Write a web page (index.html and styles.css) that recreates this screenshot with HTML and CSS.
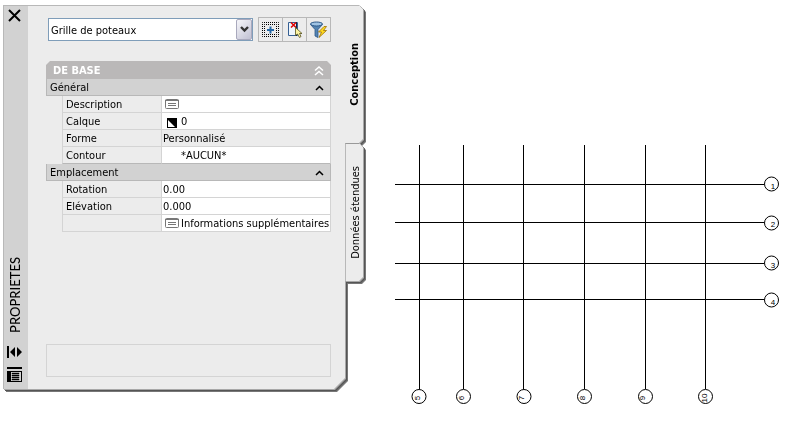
FILE: index.html
```
<!DOCTYPE html>
<html lang="fr">
<head>
    <meta charset="UTF-8">
    <meta name="viewport" content="width=device-width, initial-scale=1.0">
    <title>Propriétés</title>
    <link rel="stylesheet" href="styles.css">
</head>
<body>
    <main class="workspace">
        <section class="palette">
            <div class="titlebar">
                <button class="icon-button" aria-label="Fermer">
                    <svg width="14" height="14" viewBox="0 0 14 14"><path d="M1 1l11 11M12 1L1 12" stroke="#000" stroke-width="2" fill="none"/></svg>
                </button>
                <h1 class="title">PROPRIETES</h1>
                <button class="icon-button" aria-label="Masquer automatiquement">
                    <svg width="16" height="14" viewBox="0 0 16 14"><path d="M0 1h2v12H0zM8 2v10L3 7zM10 2v10l5-5z"/></svg>
                </button>
                <button class="icon-button" aria-label="Menu">
                    <svg width="16" height="16" viewBox="0 0 16 16"><path d="M0 0h15v2H0zM0 4h15v11H0z"/><path d="M4 5h10v9H4z" fill="#d2d2d2"/><path d="M5 6h7v1H5zM5 8h7v1H5zM5 10h7v1H5zM5 12h7v1H5z" stroke="#000" stroke-width=".4"/></svg>
                </button>
            </div>

            <div class="panel">
                <div class="toolbar">
                    <div class="combo">
                        <select aria-label="Type d'objet">
                            <option>Grille de poteaux</option>
                        </select>
                        <span class="combo-arrow"><svg width="9" height="7" viewBox="0 0 9 7"><path d="M1 1l3.500 3.500L8 1" stroke="#333" stroke-width="2.400" fill="none"/></svg></span>
                    </div>
                    <div class="tools">
                        <button aria-label="Ajout rapide">
                            <svg width="17" height="17" viewBox="0 0 17 17">
                                <path d="M.5 1.500h16v14H.5zM2.500 3.500h12v10h-12z" fill="none" stroke="#000" stroke-dasharray="1 1" stroke-dashoffset=".5"/>
                                <path d="M8.500 5.500v7M5 9h7" stroke="#2467a5" stroke-width="2"/>
                            </svg>
                        </button>
                        <button aria-label="Choix des objets">
                            <svg width="17" height="17" viewBox="0 0 17 17">
                                <path d="M2.500 1.500h9v13h-9z" fill="#eef5fc" stroke="#355f93"/>
                                <path d="M10.500 1v14" stroke="#0b2348"/>
                                <path d="M5 1.500l5 5M10 1.500l-5 5" stroke="#e00000" stroke-width="1.500"/>
                                <path d="M9.500 6.500v8l2-1.500 2 3.500 1.500-1-1.500-3h2.500z" fill="#fbf3a0" stroke="#55501c" stroke-width=".8"/>
                            </svg>
                        </button>
                        <button aria-label="Sélection rapide">
                            <svg width="17" height="17" viewBox="0 0 17 17">
                                <path d="M.5 3.500l4.500 5V15l3 1.500V8.500l4.500-5z" fill="#5584b2" stroke="#2c5889" stroke-width=".8"/>
                                <ellipse cx="6.500" cy="3" rx="6" ry="2" fill="#9fc3e4" stroke="#2c5889"/>
                                <path d="M14 5.500L8.500 11h3L9 16.500l7.500-7h-3l3-4z" fill="#ffd91f" stroke="#9b7008" stroke-width=".8"/>
                            </svg>
                        </button>
                    </div>
                </div>

                <div class="category">
                    <h2>DE BASE</h2>
                    <button class="icon-button" aria-label="Réduire tout">
                        <svg width="10" height="10" viewBox="0 0 10 10"><path d="M1 4.500L5 1l4 3.500M1 9l4-3.500L9 9" stroke="#fff" stroke-width="1.500" fill="none"/></svg>
                    </button>
                </div>
                <table class="properties">
                    <colgroup>
                        <col class="col-indent">
                        <col class="col-name">
                        <col>
                    </colgroup>
                    <tbody>
                        <tr class="group">
                            <th colspan="3" scope="rowgroup">
                                <div class="group-title">Général
                                    <button class="icon-button" aria-label="Réduire Général"><svg width="9" height="6" viewBox="0 0 9 6"><path d="M1 5l3.500-3.500L8 5" stroke="#000" stroke-width="1.500" fill="none"/></svg></button>
                                </div>
                            </th>
                        </tr>
                        <tr>
                            <td class="indent"></td>
                            <th scope="row">Description</th>
                            <td><div class="value"><span class="slot"><svg width="14" height="10" viewBox="0 0 14 10"><rect x=".5" y=".5" width="13" height="9" rx="1" fill="#fff" stroke="#777"/><path d="M0 1.500h14M3 4.500h8M3 6.500h8" stroke="#777"/></svg></span></div></td>
                        </tr>
                        <tr>
                            <td class="indent"></td>
                            <th scope="row">Calque</th>
                            <td><div class="value"><span class="slot layer"><svg width="10" height="10" viewBox="0 0 10 10"><path d="M0 0h10v10H0z"/><path d="M1 2v7h7z" fill="#fff"/></svg></span>0</div></td>
                        </tr>
                        <tr class="readonly">
                            <td class="indent"></td>
                            <th scope="row">Forme</th>
                            <td><div class="value">Personnalisé</div></td>
                        </tr>
                        <tr>
                            <td class="indent"></td>
                            <th scope="row">Contour</th>
                            <td><div class="value"><span class="slot"></span>*AUCUN*</div></td>
                        </tr>
                    </tbody>
                    <tbody>
                        <tr class="group">
                            <th colspan="3" scope="rowgroup">
                                <div class="group-title">Emplacement
                                    <button class="icon-button" aria-label="Réduire Emplacement"><svg width="9" height="6" viewBox="0 0 9 6"><path d="M1 5l3.500-3.500L8 5" stroke="#000" stroke-width="1.500" fill="none"/></svg></button>
                                </div>
                            </th>
                        </tr>
                        <tr>
                            <td class="indent"></td>
                            <th scope="row">Rotation</th>
                            <td><div class="value">0.00</div></td>
                        </tr>
                        <tr>
                            <td class="indent"></td>
                            <th scope="row">Elévation</th>
                            <td><div class="value">0.000</div></td>
                        </tr>
                        <tr>
                            <td class="indent"></td>
                            <th scope="row"></th>
                            <td><div class="value"><span class="slot"><svg width="14" height="10" viewBox="0 0 14 10"><rect x=".5" y=".5" width="13" height="9" rx="1" fill="#fff" stroke="#777"/><path d="M0 1.500h14M3 4.500h8M3 6.500h8" stroke="#777"/></svg></span>Informations supplémentaires</div></td>
                        </tr>
                    </tbody>
                </table>

                <div class="help-box"></div>
            </div>

            <nav class="tabs">
                <button class="tab active"><span>Conception</span></button>
                <button class="tab"><span>Données étendues</span></button>
            </nav>
        </section>

        <!-- column grid, labels are turned with the lines -->
        <svg class="drawing" viewBox="394 144 386 262" role="img" aria-label="Grille de poteaux">
            <g class="lines">
                <path d="M395 184.500H764M395 222.500H764M395 263.500H764M395 299.500H764"/>
                <path d="M419.500 145V389M463.500 145V389M523.500 145V389M584.500 145V389M645.500 145V389M705.500 145V389"/>
                <circle cx="771.500" cy="184" r="7"/>
                <circle cx="771.500" cy="223" r="7"/>
                <circle cx="771.500" cy="263" r="7"/>
                <circle cx="771.500" cy="300" r="7"/>
                <circle cx="419" cy="396.500" r="7"/>
                <circle cx="463.500" cy="396.500" r="7"/>
                <circle cx="524" cy="396.500" r="7"/>
                <circle cx="584.500" cy="396.500" r="7"/>
                <circle cx="645.500" cy="396.500" r="7"/>
                <circle cx="705.500" cy="396.500" r="7"/>
            </g>
            <g class="labels">
                <text x="773" y="189">1</text>
                <text x="773" y="227">2</text>
                <text x="773" y="268">3</text>
                <text x="773" y="305">4</text>
                <text transform="translate(420 398) rotate(-90)">5</text>
                <text transform="translate(464 398) rotate(-90)">6</text>
                <text transform="translate(524 398) rotate(-90)">7</text>
                <text transform="translate(585 398) rotate(-90)">8</text>
                <text transform="translate(645 398) rotate(-90)">9</text>
                <text transform="translate(707 398) rotate(-90)">10</text>
            </g>
        </svg>
    </main>
</body>
</html>
```
FILE: styles.css
```
* {
    box-sizing: border-box;
}
body {
    margin: 0;
    background-color: #fff;
    color: #000;
    font-family: "DejaVu Sans Condensed", "DejaVu Sans", sans-serif;
    font-size: 11px;
    line-height: 14px;
}
button, select {
    font: inherit;
    color: inherit;
    margin: 0;
    padding: 0;
    border: none;
    background: none;
}
svg {
    display: block;
}
.icon-button {
    display: block;
    line-height: 0;
}
.workspace {
    display: flex;
    gap: 31px;
    min-height: 100vh;
    padding: 5px 5px 16px 3px;
}

/* palette */
.palette {
    flex: 1 1 360px;
    display: flex;
    margin-bottom: 17px;
    filter: drop-shadow(1px 1px 0 #a8a8a8) drop-shadow(1px 1px 0 #555) drop-shadow(1px 1px 0 #777);
}
.titlebar {
    width: 25px;
    display: flex;
    flex-direction: column;
    align-items: center;
    gap: 8px;
    padding: 3px 2px 6px 0;
    background-color: #d2d2d2;
    border-top: 1px solid #b8b8b8;
    border-left: 1px solid #b8b8b8;
}
.title {
    margin: auto 0 4px;
    font-family: Lato, sans-serif;
    font-size: 13px;
    font-weight: 500;
    line-height: 16px;
    writing-mode: vertical-rl;
    transform: rotate(180deg);
}
.panel {
    flex: 1;
    display: flex;
    flex-direction: column;
    padding: 11px 14px 12px 18px;
    background-color: #ececec;
    border-top: 1px solid #b8b8b8;
    clip-path: polygon(0 0, 100% 0, 100% calc(100% - 11px), calc(100% - 11px) 100%, 0 100%);
}
.toolbar {
    display: flex;
    align-items: center;
    gap: 5px;
    margin-bottom: 19px;
    padding-left: 2px;
}
.combo {
    flex: 1;
    position: relative;
}
.combo select {
    display: block;
    width: 100%;
    height: 23px;
    padding: 2px 20px 0 2px;
    appearance: none;
    background-color: #fff;
    border: 1px solid #7f9db9;
    border-radius: 0;
}
.combo-arrow {
    position: absolute;
    top: 1px;
    right: 1px;
    bottom: 1px;
    width: 16px;
    display: flex;
    align-items: center;
    justify-content: center;
    background: linear-gradient(135deg, #f6f6fa, #c0c0d2);
    border: 1px solid #a9a9bd;
    border-radius: 2px;
    pointer-events: none;
}
.tools {
    display: flex;
    border: 1px solid #b8b8b8;
}
.tools button {
    display: flex;
    align-items: center;
    justify-content: center;
    width: 23px;
    height: 23px;
}
.tools button + button {
    width: 24px;
    border-left: 1px solid #b8b8b8;
}

/* property grid */
.category {
    display: flex;
    align-items: center;
    justify-content: space-between;
    height: 18px;
    padding: 2px 7px 0;
    background-color: #bab8b8;
    color: #fff;
    clip-path: polygon(0 4px, 4px 0, calc(100% - 4px) 0, 100% 4px, 100% 100%, 0 100%);
}
.category h2 {
    margin: 0;
    font-size: 11px;
    font-weight: bold;
}
.properties {
    width: 100%;
    table-layout: fixed;
    border-collapse: separate;
    border-spacing: 0;
}
.col-indent {
    width: 16px;
}
.col-name {
    width: 99px;
}
.properties th, .properties td {
    height: 17px;
    padding: 2px 0 0;
    font-weight: normal;
    text-align: left;
    white-space: nowrap;
    border-bottom: 1px solid #d4d4d4;
    border-left: 1px solid #d4d4d4;
}
.properties th {
    padding-left: 3px;
}
.properties td:last-child {
    background-color: #fff;
    border-right: 1px solid #d4d4d4;
}
.properties .readonly td:last-child {
    background-color: #ececec;
}
.properties .indent {
    border: none;
}
.properties .group th {
    background-color: #d2d2d2;
    border: 1px solid #b8b8b8;
    border-top: none;
}
.properties tbody:first-of-type tr:last-child th,
.properties tbody:first-of-type tr:last-child td {
    border-bottom-color: #b8b8b8;
}
.group-title {
    display: flex;
    align-items: center;
    justify-content: space-between;
    padding-right: 6px;
}
.value {
    display: flex;
    align-items: center;
    height: 14px;
    padding-left: 1px;
}
.slot {
    flex: none;
    width: 18px;
    padding: 0 0 2px 2px;
}
.layer {
    padding: 2px 0 0 4px;
}
.help-box {
    height: 33px;
    margin-top: auto;
    border: 1px solid #d4d4d4;
}

/* side tabs */
.tabs {
    width: 18px;
    display: flex;
    flex-direction: column;
}
.tab {
    display: flex;
    align-items: center;
    justify-content: center;
    height: 138px;
    padding-left: 2px;
    background-color: #ececec;
    border-top: 1px solid #999;
    border-left: 1px solid #b8b8b8;
    clip-path: polygon(0 0, calc(100% - 4px) 0, 100% 4px, 100% calc(100% - 4px), calc(100% - 4px) 100%, 0 100%);
}
.tab.active {
    font-weight: bold;
    border-top-color: #b8b8b8;
    border-left: none;
}
.tab span {
    line-height: 16px;
    white-space: nowrap;
    writing-mode: vertical-rl;
    transform: rotate(180deg);
}

/* drawing */
.drawing {
    flex: 1 1 386px;
    min-width: 0;
    align-self: flex-end;
}
.lines {
    fill: none;
    stroke: #000;
    stroke-width: 1px;
}
.labels {
    font-family: "Liberation Sans", sans-serif;
    font-size: 8px;
    text-anchor: middle;
}
```
